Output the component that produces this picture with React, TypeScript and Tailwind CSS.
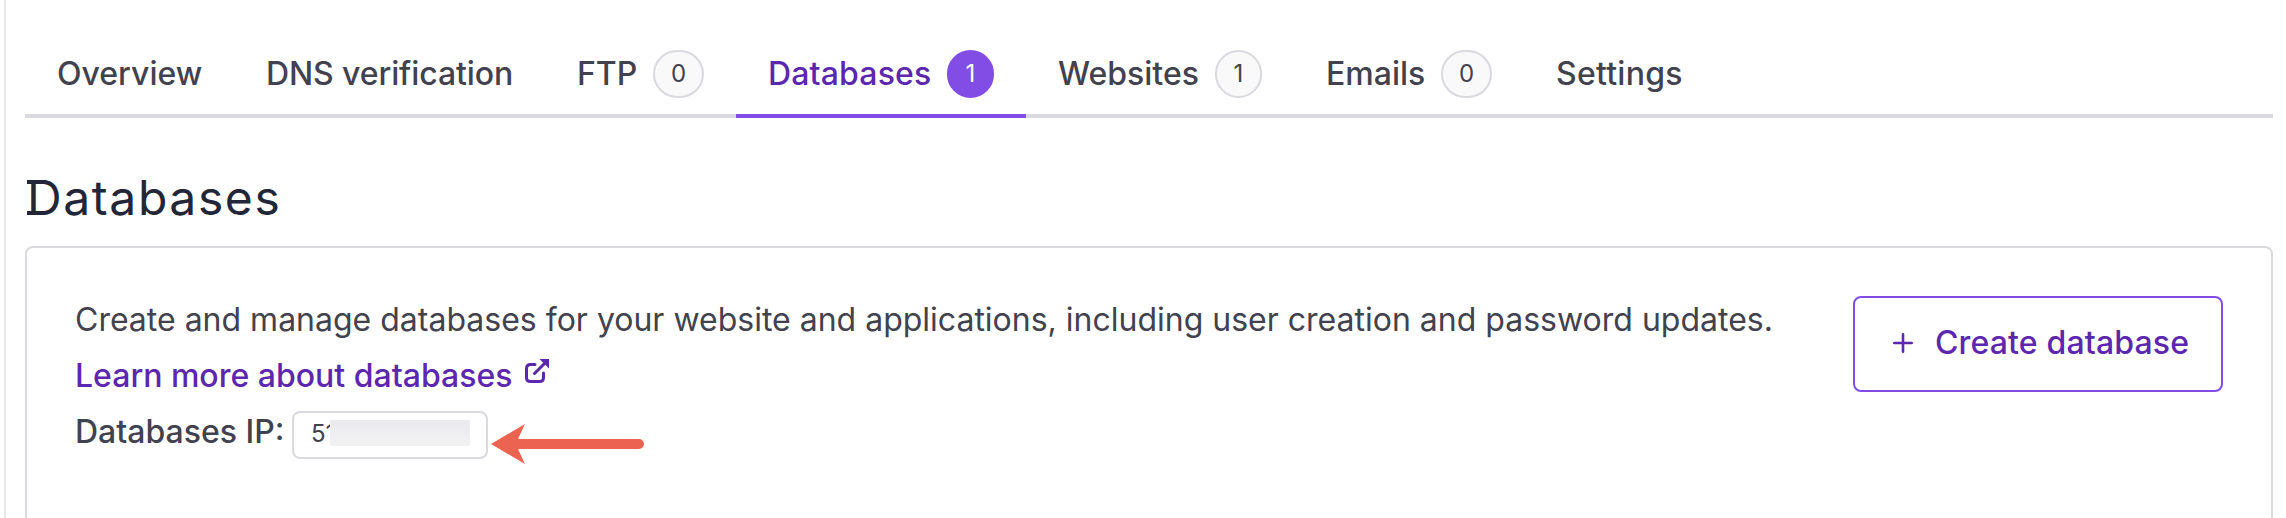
import React from "react";

type Tab = { label: string; count?: number; active?: boolean; width: string; text: string };

const tabs: Tab[] = [
  { label: "Overview", width: "w-[209px]", text: "w-[145px]" },
  { label: "DNS verification", width: "w-[310px]", text: "w-[247px] tracking-[-0.1px]" },
  { label: "FTP", count: 0, width: "w-[192px]", text: "w-[61px] pl-px" },
  { label: "Databases", count: 1, active: true, width: "w-[290px]", text: "w-[163px] tracking-[0.15px]" },
  { label: "Websites", count: 1, width: "w-[268px]", text: "w-[141px]" },
  { label: "Emails", count: 0, width: "w-[230px]", text: "w-[99px]" },
  { label: "Settings", width: "w-[191px]", text: "w-[128px] tracking-[0.25px]" },
];

function Badge({ count, active }: { count: number; active?: boolean }) {
  return (
    <span
      className={`ml-4 flex h-12 shrink-0 items-center justify-center rounded-full border-2 text-2xl font-normal ${
        count === 0 ? "w-[51px]" : "w-[47px]"
      } ${active ? "border-[#824de5] bg-[#824de5] text-white" : "border-[#d9d9de] bg-[#f9f9fa] text-[#42424f]"}`}
    >
      {count}
    </span>
  );
}

function TabItem({ tab }: { tab: Tab }) {
  return (
    <a
      className={`flex h-full shrink-0 items-center border-b-4 pt-[34px] pl-8 ${tab.width} ${
        tab.active ? "border-[#824de5] text-[#5c27ae]" : "border-[#d9d9de] text-[#42424f]"
      }`}
    >
      <span className={`shrink-0 whitespace-nowrap ${tab.text}`}>{tab.label}</span>
      {tab.count !== undefined && <Badge count={tab.count} active={tab.active} />}
    </a>
  );
}

function ExternalIcon() {
  return (
    <svg className="mt-[11px] ml-[13px] h-6 w-6" viewBox="0 0 24 24" fill="none" stroke="currentColor" strokeWidth="3">
      <path d="M10 5.5H5.5Q1.5 5.5 1.5 9.5V18.5Q1.5 22.5 5.5 22.5H14.5Q18.5 22.5 18.5 18.5V14" strokeLinecap="round" />
      <path d="M9.5 14.5L22 2" strokeLinecap="round" />
      <path d="M14.5 0H24V9.5Z" fill="currentColor" stroke="none" />
    </svg>
  );
}

export default function App() {
  return (
    <div className="flex h-[518px] w-[2286px] overflow-hidden bg-white pl-1 font-['Inter',sans-serif] text-[32px] text-[#42424f]">
      <div className="w-0.5 shrink-0 bg-[#e8e8eb]" />
      <main className="ml-[19px] flex w-[2248px] shrink-0 flex-col">
        <nav className="flex h-[118px] shrink-0 font-medium">
          {tabs.map((tab) => (
            <TabItem key={tab.label} tab={tab} />
          ))}
          <div className="flex-1 border-b-4 border-[#d9d9de]" />
        </nav>
        <h1 className="mt-[50px] h-[60px] pl-[2px] text-5xl leading-[60px] font-normal tracking-[1.6px] text-[#222638]">
          <span className="relative before:absolute before:top-[12px] before:left-0 before:h-[35px] before:w-[8px] before:border-y-4 before:border-[#222638]">
            D
          </span>
          atabases
        </h1>
        <section className="mt-[18px] flex h-[300px] shrink-0 justify-between rounded-lg border-2 border-[#d9d9de] pt-12 pr-12 pl-12">
          <div className="-mt-1 flex flex-col leading-[56px]">
            <p className="h-14 whitespace-nowrap">
              Create and manage databases for your website and applications, including user creation and password
              updates.
            </p>
            <a className="flex h-14 font-medium text-[#5c27ae]">
              <span className="whitespace-nowrap">Learn more about databases</span>
              <ExternalIcon />
            </a>
            <div className="flex h-14 items-start font-medium">
              <span className="w-[217px] shrink-0 whitespace-nowrap">Databases IP:</span>
              <div className="mt-[7px] flex h-12 w-[196px] shrink-0 rounded-lg border-2 border-[#d9d9de] pl-[17px] text-2xl leading-[42px] font-normal">
                <span className="w-[30px] shrink-0 whitespace-nowrap">51</span>
                <span className="relative mt-[7px] -ml-[11px] h-[26px] w-[140px] shrink-0 bg-gradient-to-b from-[#eaeaee] to-[#f2f2f3]" />
              </div>
              <svg className="mt-[20px] ml-[3px] h-10 w-[154px] shrink-0" viewBox="0 0 154 40" fill="#ed6352">
                <path d="M0 20L34 0L27 15H148A5 5 0 0 1 148 25H27L34 40Z" />
              </svg>
            </div>
          </div>
          <button className="flex h-24 w-[370px] shrink-0 items-center rounded-lg border-2 border-[#824de5] pb-0.5 pl-[38px] font-medium text-[#5c27ae]">
            <svg className="h-5 w-5 shrink-0" viewBox="0 0 20 20" stroke="currentColor" strokeWidth="2.6" strokeLinecap="round">
              <path d="M10 1.3V18.7M1.3 10H18.7" />
            </svg>
            <span className="ml-[22px] tracking-[0.15px] whitespace-nowrap">Create database</span>
          </button>
        </section>
      </main>
    </div>
  );
}
